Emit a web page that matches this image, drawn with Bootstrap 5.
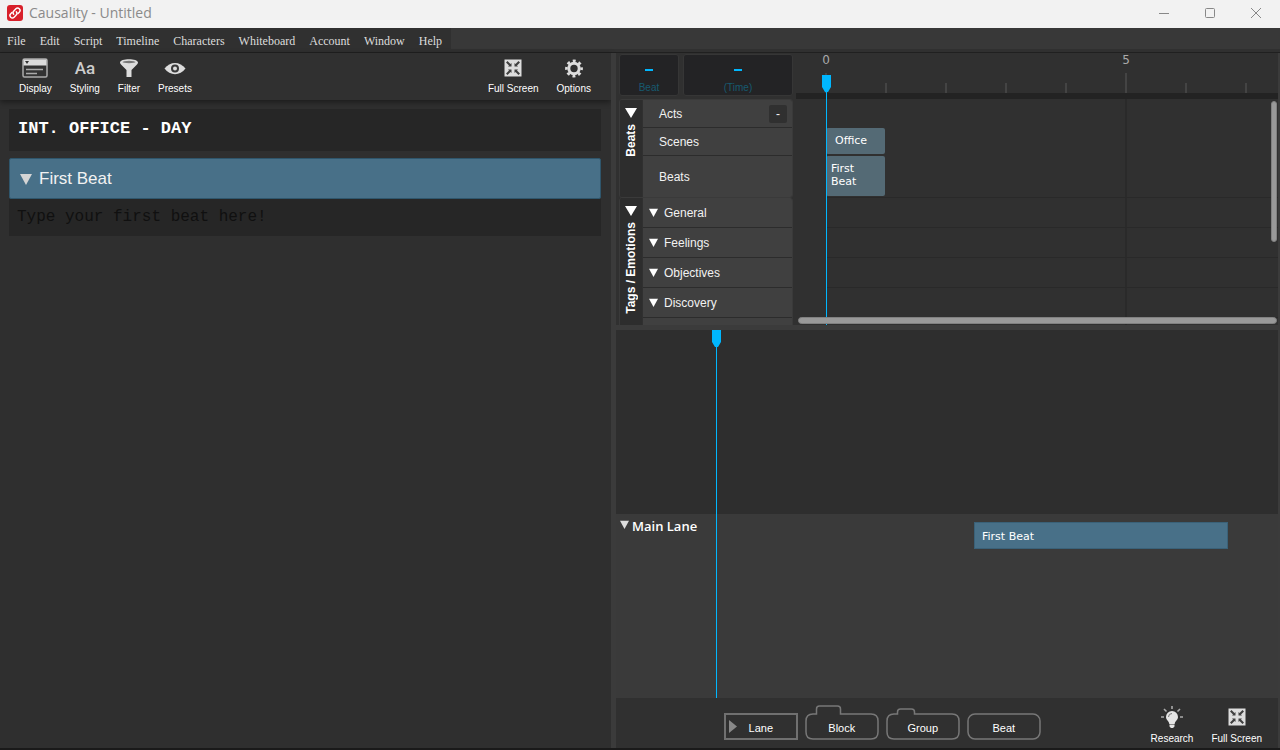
<!DOCTYPE html>
<html lang="en">
<head>
<meta charset="utf-8">
<meta name="viewport" content="width=device-width, initial-scale=1">
<title>Causality - Untitled</title>
<link href="https://cdn.jsdelivr.net/npm/bootstrap@5.3.0/dist/css/bootstrap.min.css" rel="stylesheet">
<style>
:root{--panel:#303030;--edge:#3b3b3b;--dark:#262626;--cyan:#00b7ff;--beat:#487088;--row:#404040}
body{background:#1a1a1a;color:#eee;font-family:"Liberation Sans",Arial,sans-serif;font-size:12px;line-height:16px}
button{background:none;border:0;padding:0;color:inherit;font:inherit}
svg{display:block}
.app{min-height:100vh;padding-bottom:2px}
/* window chrome */
.titlebar{height:28px;background:#f2f2f2;color:#8a8a8a;padding:0 1px 3px 7px}
.titlebar h1{font:14px/20px "Open Sans","Noto Sans",sans-serif;margin:0 0 0 6px}
.winbtn{width:46px;height:24px;display:grid;place-items:center}
.menubar{height:25px;background:linear-gradient(#383838 21px,#303030 21px);border-bottom:1px solid #202020}
.menus{background:var(--panel);padding:1px 9px 0 7px;gap:14px;font:12px/24px "Liberation Serif","Times New Roman",serif}
.menus a{color:#ddd;text-decoration:none}
/* panes */
.leftpane{flex:0 0 calc(50% - 29px);background:#2f2f2f}
.split-v{flex:0 0 5px;background:var(--edge)}
.split-h{flex:0 0 5px;background:var(--edge)}
.rightpane{border-right:2px solid var(--edge);background:var(--panel);min-width:0}
.tools{height:47px;background:var(--panel);padding:5px 20px 0 19px;gap:18px;box-shadow:0 2px 6px rgba(0,0,0,.45)}
.tool svg{margin:0 auto 4px}
.tool{font-size:10px;line-height:14px;white-space:nowrap;color:#fff}
.script{padding:9px 10px 0 9px}
.slug{background:var(--dark);font:bold 17px/24px "Liberation Mono","Courier New",monospace;color:#fff;padding:8px 9px 10px;margin:0 0 7px}
.beathead{background:var(--beat);border:1px solid #2f566c;border-radius:2px;height:41px;padding-left:10px;font-size:17px;color:#f2f2f2;gap:7px}
.beattext{background:var(--dark);border:0;height:37px;padding:0 8px 2px;font:16px/24px "Liberation Mono","Courier New",monospace;outline:0}
.beattext::placeholder{color:#101010;opacity:1}
/* timeline */
.timeline{flex:0 0 272px;overflow:hidden}
.heads{flex:0 0 180px;padding:1px 3px 0}
.readout{height:42px;background:#232325;border:1px solid #363636;border-radius:3px;color:#175a70;font-size:10px;line-height:12px;padding-top:14px}
.readout.beatno{flex:0 0 60px}
.readout i{width:8px;height:2px;background:var(--cyan);margin-bottom:11px}
.trackgroup{border:1px solid #3a3a3a;border-radius:3px;overflow:hidden}
.trackgroup.first{margin-top:3px}
.trackgroup.next{border-top:0}
.sidehead{flex:0 0 22px;background:#2d2d2d;padding-top:8px}
.sidehead span{writing-mode:vertical-rl;transform:rotate(180deg);font-weight:bold;font-size:12px;color:#fff;white-space:nowrap;margin-top:6px;line-height:16px}
.trk{background:var(--row);border-bottom:1px solid #2c2c2c;margin-left:1px;color:#f2f2f2;height:28px;padding:0 5px 0 16px}
.trk.tall{height:41px;border:0}
.tag{height:30px;padding-left:6px;gap:6px}
.minus{width:18px;height:18px;background:#303030;border-radius:2px;line-height:16px}
.canvas{min-width:0;overflow:hidden}
.ruler{height:40px;margin-left:29px}
.tick{flex:0 0 60px;height:40px;color:#aaa;font:12px/14px "DejaVu Sans",sans-serif}
.tick::after{content:"";width:2px;height:10px;background:#444;margin-top:auto}
.tick.big::after{height:20px}
.tick span{width:16px;margin-left:-7px;text-align:center}
.rulerbar{height:6px;background:#232323}
.lanes{background:linear-gradient(#2a2a2a,#2a2a2a) 329px 0/2px 100% no-repeat}
.lane-row{margin-left:30px;border-bottom:1px solid #292929;height:30px}
.lane-row.acts{height:28px;border:0}
.lane-row.scenes{height:29px;border:0;padding-top:1px}
.lane-row.beats{height:42px}
.clip{width:59px;height:40px;background:#546a75;border-radius:2px;color:#fff;font:11px/13px "DejaVu Sans",sans-serif;padding:6px 5px}
.scenes .clip{height:26px;padding-left:9px}
.playhead{width:11px;pointer-events:none}
.playhead::after{content:"";flex:1;width:1px;background:var(--cyan)}
.ph-time{left:25px;top:22px}
.ph-board{left:95px}
.bar{background:#999;border:1px solid #808080;border-radius:4px}
.bar-v{width:6px;height:141px;top:48px;right:1px}
.bar-h{height:7px;left:2px;right:1px;bottom:1px}
/* whiteboard */
.board-top{flex:1 1 0;background:#2e2e2e}
.board-lane{flex:1 1 0;background:#3a3a3a;padding:0 50px 0 4px}
.board-lane h2{font:600 13px/16px "Open Sans","Noto Sans",sans-serif;gap:3px;color:#fff;margin:4px 0 0}
.board-lane h2 svg{margin-top:2px}
.note{width:254px;height:27px;margin-top:8px;background:var(--beat);border:1px solid #3a6178;color:#fff;font:11px/13px "DejaVu Sans",sans-serif;padding:1px 0 0 7px}
.bottom{flex:0 0 50px;background:var(--panel)}
.shapes{gap:7px;padding:7px 2px 0 0}
.views{gap:18px;padding:8px 16px 0 0}
.shape{width:74px;height:36px;font-size:11px;line-height:14px;color:#fff}
.shape svg{inset:0;position:absolute}
.shape span{position:relative;padding-top:9px;display:block}
</style>
</head>
<body>
<svg width="0" height="0" class="position-absolute">
<symbol id="full" viewBox="0 0 20 20"><path fill="#ddd" d="M1.500 1.500h17v17h-17z"/><g fill="#404040"><path d="M8.500 8.500H5l1-1-3-3L4.500 3l3 3 1-1zM11.500 8.500V5l1 1 3-3L17 4.500l-3 3 1 1zM8.500 11.500V15l-1-1-3 3L3 15.500l3-3-1-1zM11.500 11.500H15l-1 1 3 3-1.500 1.500-3-3-1 1z"/></g></symbol>
<symbol id="tri" viewBox="0 0 12 12"><path d="M0 1h12L6 12z"/></symbol>
<symbol id="head" viewBox="0 0 11 17"><path fill="#00b7ff" d="M1 0h9v12l-3 5H4l-3-5z"/></symbol>
</svg>
<div class="app d-flex flex-column">
<header>
<div class="titlebar d-flex align-items-center">
<svg width="16" height="16" viewBox="0 0 16 16"><rect width="16" height="16" rx="3" fill="#d8202a"/><g fill="none" stroke="#fff" stroke-width="1.400" stroke-linecap="round"><path d="M6.700 9.300A2.500 2.500 0 0 1 6.800 5.900L8.900 3.800a2.400 2.400 0 0 1 3.400 3.400L11 8.600"/><path d="M9.300 6.700A2.500 2.500 0 0 1 9.200 10.100L7.100 12.200a2.400 2.400 0 0 1-3.400-3.400L5 7.400"/></g></svg>
<h1>Causality - Untitled</h1>
<div class="d-flex ms-auto">
<button class="winbtn" aria-label="Minimize"><svg width="12" height="12" stroke="#888"><path d="M1 6.500h10"/></svg></button>
<button class="winbtn" aria-label="Maximize"><svg width="12" height="12" fill="none" stroke="#888"><rect x="1.500" y="1.500" width="9" height="9" rx="1"/></svg></button>
<button class="winbtn" aria-label="Close"><svg width="12" height="12" stroke="#888"><path d="M1 1l10 10M11 1L1 11"/></svg></button>
</div>
</div>
<div class="menubar d-flex">
<nav class="menus d-flex"><a href="#">File</a><a href="#">Edit</a><a href="#">Script</a><a href="#">Timeline</a><a href="#">Characters</a><a href="#">Whiteboard</a><a href="#">Account</a><a href="#">Window</a><a href="#">Help</a></nav>
</div>
</header>
<main class="d-flex flex-grow-1">
<section class="leftpane">
<div class="tools d-flex align-items-start">
<button class="tool"><svg width="26" height="20" viewBox="0 0 26 20"><rect x="1" y="1" width="24" height="18" rx="1.500" fill="#333" stroke="#aaa" stroke-width="1.500"/><path fill="#ddd" d="M1.500 1.500h23v6h-23z"/><path fill="#333" d="M3 3h4L5 6z"/><path stroke="#aaa" stroke-width="1.500" d="M4 11.500h17M4 15.500h11"/></svg>Display</button>
<button class="tool"><svg width="22" height="20"><text x="11" y="16" text-anchor="middle" font-family="Roboto,sans-serif" font-size="17" font-weight="500" fill="#ccc">Aa</text></svg>Styling</button>
<button class="tool"><svg width="20" height="20" viewBox="0 0 20 20"><path fill="#ddd" d="M1 4.500C1 0 19 0 19 4.500c0 1-1 2-2 3L12.500 12v7h-5v-7L3 7.500c-1-1-2-2-2-3z"/><ellipse cx="10" cy="4" rx="6.500" ry="1.200" fill="#777"/></svg>Filter</button>
<button class="tool"><svg width="22" height="20" viewBox="0 0 22 20"><path fill="#ddd" d="M0.500 10.500C6 3 16 3 21.500 10.500 16 18 6 18 .5 10.500z"/><circle cx="11" cy="10.500" r="4" fill="#383838"/><circle cx="11" cy="10.500" r="2" fill="#ddd"/></svg>Presets</button>
<button class="tool ms-auto"><svg width="20" height="20"><use href="#full"/></svg>Full Screen</button>
<button class="tool"><svg width="20" height="20" viewBox="0 0 20 20" fill="none" stroke="#ddd"><circle cx="10" cy="10.500" r="5.200" stroke-width="3"/><circle cx="10" cy="10.500" r="7.600" stroke-width="2.600" stroke-dasharray="2.970 3" stroke-dashoffset="1.500"/></svg>Options</button>
</div>
<div class="script">
<h2 class="slug">INT. OFFICE - DAY</h2>
<button class="beathead d-flex align-items-center w-100"><svg width="12" height="12" fill="#d5d5d5"><use href="#tri"/></svg>First Beat</button>
<input class="beattext d-block w-100" aria-label="Beat text" placeholder="Type your first beat here!">
</div>
</section>
<div class="split-v"></div>
<section class="rightpane flex-grow-1 d-flex flex-column">
<div class="timeline d-flex">
<div class="heads">
<div class="d-flex gap-1">
<div class="readout beatno d-flex flex-column align-items-center"><i></i>Beat</div>
<div class="readout d-flex flex-column align-items-center flex-grow-1"><i></i>(Time)</div>
</div>
<div class="trackgroup first d-flex">
<button class="sidehead d-flex flex-column align-items-center justify-content-start"><svg width="12" height="10" viewBox="0 1 12 11" preserveAspectRatio="none" fill="#fff"><path d="M0 1h12L6 12z"/></svg><span>Beats</span></button>
<div class="flex-grow-1">
<div class="trk d-flex align-items-center justify-content-between">Acts<button class="minus">-</button></div>
<div class="trk d-flex align-items-center">Scenes</div>
<div class="trk tall d-flex align-items-center">Beats</div>
</div>
</div>
<div class="trackgroup next d-flex">
<button class="sidehead d-flex flex-column align-items-center justify-content-start"><svg width="12" height="10" viewBox="0 1 12 11" preserveAspectRatio="none" fill="#fff"><path d="M0 1h12L6 12z"/></svg><span>Tags / Emotions</span></button>
<div class="flex-grow-1">
<button class="trk tag w-100 d-flex align-items-center"><svg width="9" height="9" fill="#fff"><use href="#tri"/></svg>General</button>
<button class="trk tag w-100 d-flex align-items-center"><svg width="9" height="9" fill="#fff"><use href="#tri"/></svg>Feelings</button>
<button class="trk tag w-100 d-flex align-items-center"><svg width="9" height="9" fill="#fff"><use href="#tri"/></svg>Objectives</button>
<button class="trk tag w-100 d-flex align-items-center"><svg width="9" height="9" fill="#fff"><use href="#tri"/></svg>Discovery</button>
<div class="trk tag"></div>
</div>
</div>
</div>
<div class="canvas flex-grow-1 position-relative d-flex flex-column">
<div class="ruler d-flex">
<div class="tick big d-flex flex-column"><span>0</span></div><div class="tick d-flex flex-column"></div><div class="tick d-flex flex-column"></div><div class="tick d-flex flex-column"></div><div class="tick d-flex flex-column"></div><div class="tick big d-flex flex-column"><span>5</span></div><div class="tick d-flex flex-column"></div><div class="tick d-flex flex-column"></div>
</div>
<div class="rulerbar"></div>
<div class="lanes flex-grow-1">
<div class="lane-row acts"></div>
<div class="lane-row scenes"><div class="clip">Office</div></div>
<div class="lane-row beats"><div class="clip">First<br>Beat</div></div>
<div class="lane-row"></div><div class="lane-row"></div><div class="lane-row"></div><div class="lane-row"></div>
</div>
<div class="playhead ph-time position-absolute bottom-0 d-flex flex-column align-items-center"><svg width="11" height="17"><use href="#head"/></svg></div>
<div class="bar bar-v position-absolute"></div>
<div class="bar bar-h position-absolute"></div>
</div>
</div>
<div class="split-h"></div>
<div class="flex-grow-1 d-flex flex-column position-relative">
<div class="board-top"></div>
<div class="board-lane d-flex justify-content-between align-items-start">
<h2 class="d-flex"><svg width="9" height="9" fill="#ddd"><use href="#tri"/></svg>Main Lane</h2>
<div class="note d-flex align-items-center">First Beat</div>
</div>
<div class="playhead ph-board position-absolute top-0 bottom-0 d-flex flex-column align-items-center"><svg width="11" height="17"><use href="#head"/></svg></div>
</div>
<div class="bottom d-flex">
<div class="shapes flex-grow-1 d-flex justify-content-center">
<button class="shape position-relative"><svg width="74" height="36" fill="none" stroke="#707070" stroke-width="2"><path d="M1 9h72v25H1z"/><path fill="#888" stroke="none" d="M5 15l8 6.500L5 28z"/></svg><span>Lane</span></button>
<button class="shape position-relative"><svg width="74" height="36" fill="none" stroke="#777" stroke-width="1.500"><path d="M8 9h3.500V4q0-3 3-3h18q3 0 3 3v5H66q7 0 7 7v11q0 7-7 7H8q-7 0-7-7V16q0-7 7-7z"/></svg><span>Block</span></button>
<button class="shape position-relative"><svg width="74" height="36" fill="none" stroke="#777" stroke-width="1.500"><path d="M8 9h3.500V7q0-3 3-3h11q3 0 3 3v2H66q7 0 7 7v11q0 7-7 7H8q-7 0-7-7V16q0-7 7-7z"/></svg><span>Group</span></button>
<button class="shape position-relative"><svg width="74" height="36" fill="none" stroke="#777" stroke-width="1.500"><rect x="1" y="9" width="72" height="25" rx="7"/></svg><span>Beat</span></button>
</div>
<div class="views d-flex align-items-start">
<button class="tool"><svg width="24" height="22" viewBox="0 0 24 22"><path fill="#e5e5e5" d="M12 5a6 6 0 0 0-6 6c0 3 3 4 3.300 7h5.400c.3-3 3.300-4 3.300-7a6 6 0 0 0-6-6zM9.500 18.500h5v2l-1.500 1.500h-2l-1.500-1.500z"/><path fill="none" stroke="#777" d="M8.500 11a3.500 3.500 0 0 1 3.500-3.500"/><path stroke="#aaa" stroke-width="1.600" d="M12 0v3M4 3l2.500 2.500M20 3l-2.500 2.500M1 11h3M20 11h3"/></svg>Research</button>
<button class="tool"><svg width="20" height="22"><use href="#full"/></svg>Full Screen</button>
</div>
</div>
</section>
</main>
</div>
<script src="https://cdn.jsdelivr.net/npm/bootstrap@5.3.0/dist/js/bootstrap.bundle.min.js"></script>
</body>
</html>
